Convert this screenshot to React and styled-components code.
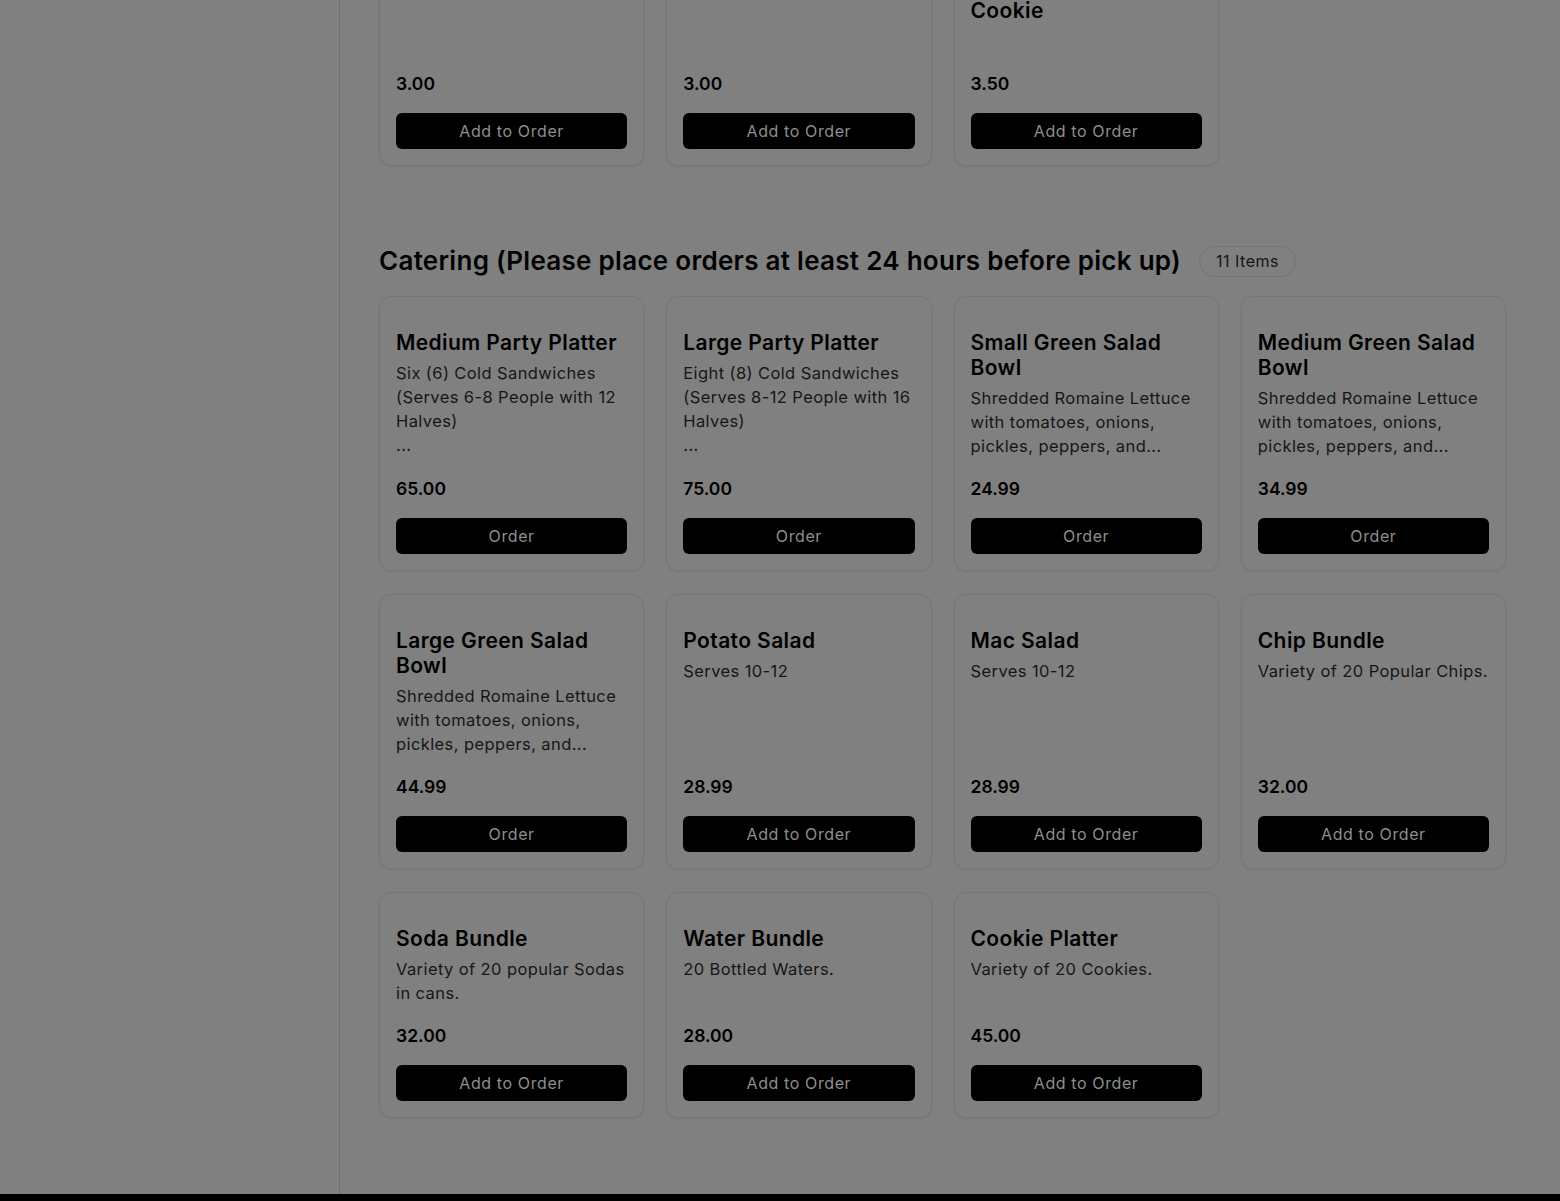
import React from "react";
import styled, { createGlobalStyle } from "styled-components";

const Global = createGlobalStyle`
  html, body { margin: 0; padding: 0; }
  body {
    background: #808080;
    font-family: Inter, "Open Sans", "Liberation Sans", sans-serif;
    color: #000;
    overflow: hidden;
  }
  * { box-sizing: border-box; }
`;

const Page = styled.div`
  display: flex;
  flex-direction: column;
  height: 1201px;
  overflow: hidden;
`;

const Body = styled.div`
  display: flex;
  flex: 0 0 1194px;
  overflow: hidden;
`;

const Sidebar = styled.aside`
  flex: 0 0 340px;
  border-right: 1px solid #6f6f6f;
`;

const Main = styled.main`
  flex: 1;
  padding: 0 54px 78px 39px;
  display: flex;
  flex-direction: column;
`;

const Scrolled = styled.div`
  margin-top: ${(p) => p.$offset}px;
  display: flex;
  flex-direction: column;
  gap: 78px;
`;

const Footer = styled.footer`
  flex: 1;
  background: #000;
`;

const Section = styled.section`
  display: flex;
  flex-direction: column;
  gap: 18px;
`;

const Header = styled.div`
  display: flex;
  align-items: center;
  gap: 18px;
  height: 34px;
`;

const Heading = styled.h2`
  margin: 0;
  font-size: 26px;
  font-weight: 600;
  line-height: 34px;
  letter-spacing: 0.28px;
  color: #000;
`;

const Badge = styled.span`
  display: inline-flex;
  align-items: center;
  height: 31px;
  padding: 0 16px;
  border: 1px solid #747474;
  border-radius: 999px;
  font-size: 16px;
  letter-spacing: 0.5px;
  color: #151515;
`;

const Grid = styled.div`
  display: grid;
  grid-template-columns: repeat(4, 1fr);
  gap: 23px 22px;
`;

const Card = styled.article`
  display: flex;
  flex-direction: column;
  padding: 33px 16px 16px;
  border: 1px solid #767676;
  border-radius: 12px;
  box-shadow: 0 1px 2px rgba(0, 0, 0, 0.08);
`;

const Title = styled.h3`
  margin: 0;
  font-size: 21px;
  font-weight: 600;
  line-height: 25px;
  letter-spacing: 0.4px;
  white-space: nowrap;
  color: #000;
`;

const Desc = styled.p`
  margin: 6px 0 0;
  font-size: 16.5px;
  line-height: 24px;
  letter-spacing: 0.4px;
  white-space: nowrap;
  color: #161616;
`;

const Price = styled.div`
  margin-top: auto;
  padding-top: 20px;
  font-size: 17.5px;
  font-weight: 600;
  line-height: 22px;
  color: #000;
`;

const Button = styled.button`
  margin-top: 18px;
  height: 36px;
  border: none;
  border-radius: 6px;
  background: #000;
  color: #8e8e8e;
  font-family: inherit;
  font-size: 16px;
  letter-spacing: 0.6px;
  cursor: pointer;
`;

const Lines = ({ lines }) =>
  lines.map((l, i) => (
    <React.Fragment key={i}>
      {i > 0 && <br />}
      {l}
    </React.Fragment>
  ));

const ItemCard = ({ item }) => (
  <Card>
    <Title>
      <Lines lines={item.title} />
    </Title>
    <Desc>{item.desc.length ? <Lines lines={item.desc} /> : "\u00a0"}</Desc>
    <Price>{item.price}</Price>
    <Button>{item.action || "Add to Order"}</Button>
  </Card>
);

const prev = [
  { title: ["Chips"], desc: [], price: "3.00" },
  { title: ["Soda"], desc: [], price: "3.00" },
  { title: ["Chocolate Chip", "Cookie"], desc: [], price: "3.50" },
];

const salad = ["Shredded Romaine Lettuce", "with tomatoes, onions,", "pickles, peppers, and..."];

const catering = [
  {
    title: ["Medium Party Platter"],
    desc: ["Six (6) Cold Sandwiches", "(Serves 6-8 People with 12", "Halves)", "..."],
    price: "65.00",
    action: "Order",
  },
  {
    title: ["Large Party Platter"],
    desc: ["Eight (8) Cold Sandwiches", "(Serves 8-12 People with 16", "Halves)", "..."],
    price: "75.00",
    action: "Order",
  },
  { title: ["Small Green Salad", "Bowl"], desc: salad, price: "24.99", action: "Order" },
  { title: ["Medium Green Salad", "Bowl"], desc: salad, price: "34.99", action: "Order" },
  { title: ["Large Green Salad", "Bowl"], desc: salad, price: "44.99", action: "Order" },
  { title: ["Potato Salad"], desc: ["Serves 10-12"], price: "28.99" },
  { title: ["Mac Salad"], desc: ["Serves 10-12"], price: "28.99" },
  { title: ["Chip Bundle"], desc: ["Variety of 20 Popular Chips."], price: "32.00" },
  { title: ["Soda Bundle"], desc: ["Variety of 20 popular Sodas", "in cans."], price: "32.00" },
  { title: ["Water Bundle"], desc: ["20 Bottled Waters."], price: "28.00" },
  { title: ["Cookie Platter"], desc: ["Variety of 20 Cookies."], price: "45.00" },
];

export default function App() {
  return (
    <>
      <Global />
      <Page>
        <Body>
          <Sidebar />
          <Main>
            <Scrolled $offset={-61}>
              <Section>
                <Grid>
                  {prev.map((it, i) => (
                    <ItemCard key={i} item={it} />
                  ))}
                </Grid>
              </Section>
              <Section>
                <Header>
                  <Heading>Catering (Please place orders at least 24 hours before pick up)</Heading>
                  <Badge>11 Items</Badge>
                </Header>
                <Grid>
                  {catering.map((it, i) => (
                    <ItemCard key={i} item={it} />
                  ))}
                </Grid>
              </Section>
            </Scrolled>
          </Main>
        </Body>
        <Footer />
      </Page>
    </>
  );
}
